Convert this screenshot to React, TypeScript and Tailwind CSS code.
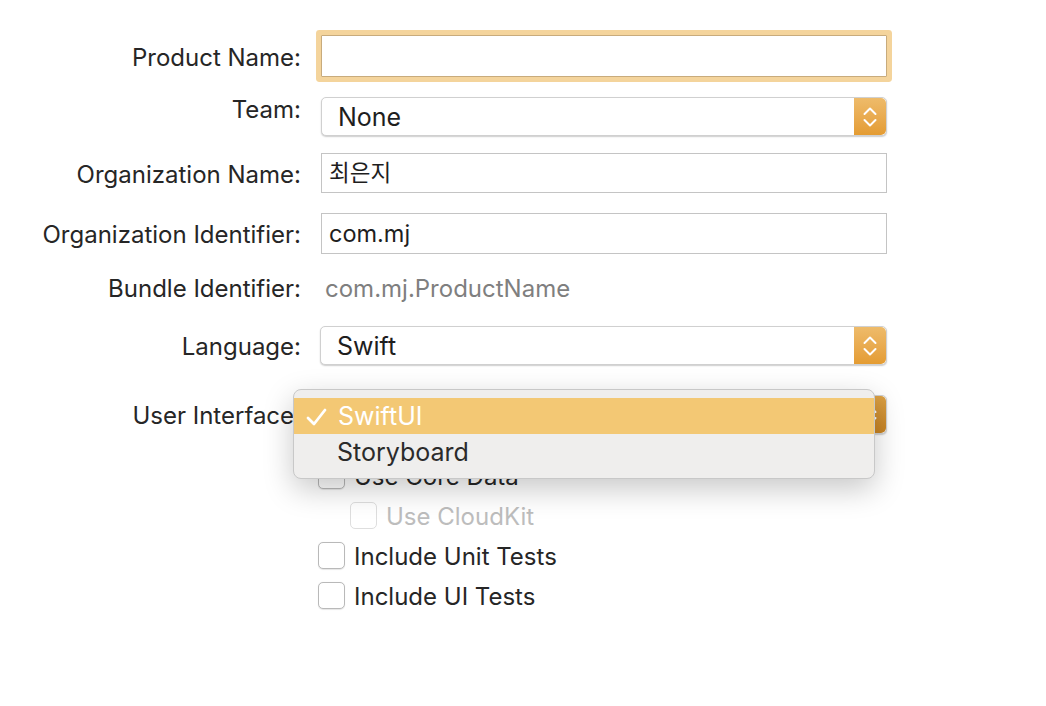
import React from "react";

const labelCls = "text-right text-[24px] leading-[28px] pt-[3px] text-[#262626]";

function Stepper({ pressed }: { pressed?: boolean }) {
  return (
    <div
      className={
        pressed
          ? "w-[32px] h-full rounded-r-[5px] flex items-center justify-center bg-linear-to-b from-[#dba044] to-[#c88423]"
          : "w-[32px] h-full rounded-r-[5px] flex items-center justify-center bg-linear-to-b from-[#eebb6a] to-[#e49c32]"
      }
    >
      <svg width="16" height="28" viewBox="0 0 16 28">
        <path
          d="M2.5 11 L8 5.5 L13.5 11 M2.5 17 L8 22.5 L13.5 17"
          stroke="white"
          strokeWidth="2"
          fill="none"
          strokeLinecap="round"
          strokeLinejoin="round"
        />
      </svg>
    </div>
  );
}

function Select({ value, pressed }: { value: string; pressed?: boolean }) {
  return (
    <div className="h-full flex bg-white border border-[#d0d0d0] rounded-[5px] shadow-[0_1px_1.5px_rgba(0,0,0,0.2)] overflow-hidden">
      <div className="flex-1 flex items-center pl-[16px] pt-[2px] text-[25px] text-[#1e1e1e]">{value}</div>
      <Stepper pressed={pressed} />
    </div>
  );
}

function TextField({ value, korean }: { value: string; korean?: boolean }) {
  return (
    <div
      className={
        korean
          ? "h-full border border-[#c4c4c4] bg-white flex items-center pl-[7px] text-[22.5px] text-[#1e1e1e]"
          : "h-full border border-[#c4c4c4] bg-white flex items-center pl-[7px] pt-[1px] text-[23.5px] text-[#1e1e1e]"
      }
    >
      {value}
    </div>
  );
}

function Check({ label, disabled }: { label: string; disabled?: boolean }) {
  return (
    <div className="flex items-center gap-[9px] h-[27px]">
      <div
        className={
          disabled
            ? "w-[27px] h-[27px] rounded-[5px] border border-[#dedede] bg-white"
            : "w-[27px] h-[27px] rounded-[5px] border border-[#b9b9b9] bg-white shadow-[0_0.5px_1px_rgba(0,0,0,0.1)]"
        }
      />
      <span
        className={
          disabled
            ? "text-[24px] leading-[27px] pt-[2px] text-[#bdbdbd]"
            : "text-[24px] leading-[27px] pt-[2px] text-[#262626]"
        }
      >
        {label}
      </span>
    </div>
  );
}

export default function App() {
  return (
    <div className="relative w-[1046px] h-[706px] bg-white overflow-hidden font-['Inter','Noto_Sans_CJK_KR',sans-serif]">
      <div className="grid grid-cols-[301px_566px] gap-x-[20px] pt-[35px]">
        {/* Product Name */}
        <div className={`${labelCls} self-center`}>Product Name:</div>
        <div className="h-[42px] border border-[#c8ab7c] bg-white rounded-[1px] shadow-[0_0_0_5px_#f4d49c]" />

        {/* Team */}
        <div className={`${labelCls} mt-[16px] self-start`}>Team:</div>
        <div className="h-[39px] mt-[20px]">
          <Select value="None" />
        </div>

        {/* Organization Name */}
        <div className={`${labelCls} mt-[17px] self-center`}>Organization Name:</div>
        <div className="h-[40px] mt-[17px]">
          <TextField value="최은지" korean />
        </div>

        {/* Organization Identifier */}
        <div className={`${labelCls} mt-[20px] self-center`}>Organization Identifier:</div>
        <div className="h-[41px] mt-[20px]">
          <TextField value="com.mj" />
        </div>

        {/* Bundle Identifier */}
        <div className={`${labelCls} mt-[18px]`}>Bundle Identifier:</div>
        <div className="mt-[18px] pl-[4px] pt-[3px] text-[24px] leading-[28px] text-[#7f7f7f]">com.mj.ProductName</div>

        {/* Language */}
        <div className={`${labelCls} mt-[23px] self-center`}>Language:</div>
        <div className="h-[39px] mt-[23px] ml-[-1px]">
          <Select value="Swift" />
        </div>

        {/* User Interface */}
        <div className={`${labelCls} mt-[30px] self-center`}>User Interface:</div>
        <div className="h-[39px] mt-[30px]">
          <Select value="SwiftUI" pressed />
        </div>

        {/* Checkboxes */}
        <div />
        <div className="mt-[28px] ml-[-3px] flex flex-col gap-[13px]">
          <Check label="Use Core Data" />
          <div className="pl-[32px]">
            <Check label="Use CloudKit" disabled />
          </div>
          <Check label="Include Unit Tests" />
          <Check label="Include UI Tests" />
        </div>
      </div>

      {/* Popup menu */}
      <div className="absolute left-[293px] top-[389px] w-[582px] h-[90px] z-10 rounded-[8px] border border-[#c8c8c8] bg-[#efeeed] shadow-[0_10px_30px_rgba(0,0,0,0.22)] pt-[8px]">
        <div className="h-[36px] bg-[#f3c874] flex items-center pt-[2px] text-[25px] text-white">
          <svg className="ml-[12px] mr-[11px]" width="21" height="20" viewBox="0 0 21 20">
            <path d="M2 11 L8 17 L19 3" stroke="white" strokeWidth="2.8" fill="none" strokeLinecap="round" strokeLinejoin="round" />
          </svg>
          SwiftUI
        </div>
        <div className="h-[36px] flex items-center pl-[43px] pt-[2px] text-[25px] text-[#2b2b2b]">Storyboard</div>
      </div>
    </div>
  );
}
